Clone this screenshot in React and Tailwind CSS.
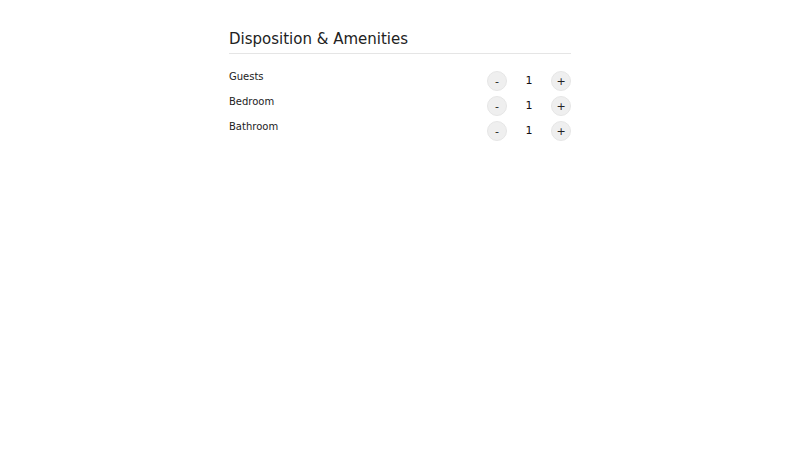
const rows = ['Guests', 'Bedroom', 'Bathroom'];

function Counter() {
  return (
    <div className="flex items-center">
      <button className="w-5 h-5 rounded-full bg-[#efefef] border border-[#e6e6e6] text-[11px] leading-none text-[#222] flex items-center justify-center">-</button>
      <span className="w-[44px] text-center text-[11px] leading-5 text-[#111]">1</span>
      <button className="w-5 h-5 rounded-full bg-[#efefef] border border-[#e6e6e6] text-[11px] leading-none text-[#222] flex items-center justify-center">+</button>
    </div>
  );
}

export default function App() {
  return (
    <div className="min-h-screen bg-white" style={{ fontFamily: '"DejaVu Sans", sans-serif' }}>
      <div className="w-[342px] mx-auto pt-[30px]">
        <h2 className="text-[15px] leading-[18px] text-[#222] pb-[5px] border-b border-[#e5e5e5]">
          Disposition &amp; Amenities
        </h2>
        <div className="mt-[17px]">
          {rows.map((r) => (
            <div key={r} className="h-[25px] flex justify-between items-start">
              <span className="text-[10px] leading-[12px] text-[#222]">{r}</span>
              <Counter />
            </div>
          ))}
        </div>
      </div>
    </div>
  );
}
